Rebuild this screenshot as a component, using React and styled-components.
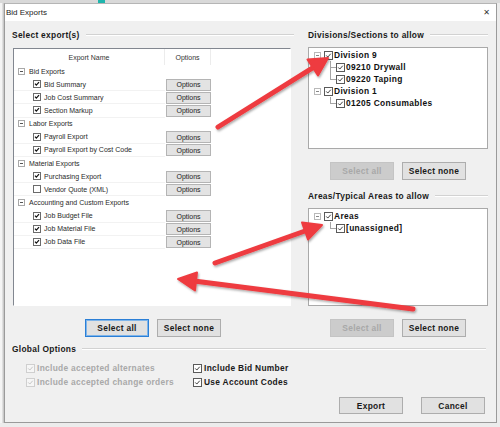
import React from 'react';
import styled, { createGlobalStyle, css } from 'styled-components';

const GlobalStyle = createGlobalStyle`
  html, body {
    margin: 0;
    padding: 0;
    background: #ececec;
    width: 500px;
    height: 427px;
    overflow: hidden;
  }
  * { box-sizing: border-box; }
`;

const boldText = css`
  font-weight: bold;
  font-size: 8.4px;
  letter-spacing: 0.3px;
`;

const exportGroups = [
  { name: 'Bid Exports', items: [['Bid Summary', true], ['Job Cost Summary', true], ['Section Markup', true]] },
  { name: 'Labor Exports', items: [['Payroll Export', true], ['Payroll Export by Cost Code', true]] },
  { name: 'Material Exports', items: [['Purchasing Export', true], ['Vendor Quote (XML)', false]] },
  {
    name: 'Accounting and Custom Exports',
    items: [['Job Budget File', true], ['Job Material File', true], ['Job Data File', true]],
  },
];

const divisions = [
  { name: 'Division 9', children: ['09210 Drywall', '09220 Taping'] },
  { name: 'Division 1', children: ['01205 Consumables'] },
];

const areas = [{ name: 'Areas', children: ['[unassigned]'] }];

const Check = ({ kind = 'classic', checked = true }) => {
  if (kind === 'classic') {
    return (
      <ClassicBox>
        {checked && (
          <svg width="8" height="8" viewBox="0 0 8 8">
            <path d="M1.3 3.6 L3.1 5.6 L6.7 1.6" fill="none" stroke="#111" strokeWidth="1.6" />
          </svg>
        )}
      </ClassicBox>
    );
  }
  return (
    <FlatBox $kind={kind}>
      {checked && (
        <svg width="9" height="9" viewBox="0 0 9 9">
          <path
            d="M1.6 4.4 L3.6 6.5 L7.4 2.2"
            fill="none"
            stroke={kind === 'disabled' ? '#c2c2c2' : '#333'}
            strokeWidth="1.2"
          />
        </svg>
      )}
    </FlatBox>
  );
};

const TreeList = ({ nodes }) => (
  <TreeBox>
    {nodes.map((node) => (
      <div key={node.name}>
        <TreeRow>
          <Expander>
            <svg width="7" height="7" viewBox="0 0 7 7">
              <rect x="0.5" y="0.5" width="6" height="6" fill="#fff" stroke="#b9b9b9" />
              <path d="M2 3.5 H5" stroke="#888" />
            </svg>
          </Expander>
          <Check kind="tree" />
          <TreeLabel>{node.name}</TreeLabel>
        </TreeRow>
        <TreeChildren>
          {node.children.map((child, i) => (
            <TreeRow key={child}>
              <Elbow $last={i === node.children.length - 1} />
              <Check kind="tree" />
              <TreeLabel>{child}</TreeLabel>
            </TreeRow>
          ))}
        </TreeChildren>
      </div>
    ))}
  </TreeBox>
);

const Arrows = () => (
  <ArrowLayer width="500" height="427" viewBox="0 0 500 427">
    <defs>
      <filter id="sh" x="-20%" y="-20%" width="140%" height="140%">
        <feDropShadow dx="1" dy="1.5" stdDeviation="1.2" floodColor="#000" floodOpacity="0.35" />
      </filter>
    </defs>
    <g filter="url(#sh)" fill="#ee3b3f" stroke="#ee3b3f" strokeLinecap="round" strokeLinejoin="round">
      <line x1="218" y1="127" x2="313" y2="67.6" strokeWidth="5" />
      <polygon points="328,58 318,75.5 307.5,59.5" strokeWidth="2" />
      <line x1="215" y1="263" x2="305" y2="231" strokeWidth="5" />
      <polygon points="322,225 308,239.5 302,222.5" strokeWidth="2" />
      <line x1="413" y1="309" x2="196" y2="281.3" strokeWidth="5" />
      <polygon points="178,279 197,272.5 195,290.5" strokeWidth="2" />
    </g>
  </ArrowLayer>
);

const App = () => {
  return (
    <>
      <GlobalStyle />
      <Screen>
        <TopStrip>
          <TealMark />
        </TopStrip>
        <Desk>
          <BackWindow />
          <Dialog>
            <TitleBar>
              <TitleText>Bid Exports</TitleText>
              <CloseGlyph>✕</CloseGlyph>
            </TitleBar>
            <Body>
              <Columns>
                <Column>
                  <GroupHeader>
                    <GroupLabel>Select export(s)</GroupLabel>
                    <Rule />
                  </GroupHeader>
                  <ListBox>
                    <HeaderRow>
                      <NameHead>Export Name</NameHead>
                      <OptHead>Options</OptHead>
                    </HeaderRow>
                    {exportGroups.map((group) => (
                      <React.Fragment key={group.name}>
                        <ListRow>
                          <NameCell $group>
                            <GroupToggle>
                              <svg width="7" height="7" viewBox="0 0 7 7">
                                <rect x="0.5" y="0.5" width="6" height="6" fill="#fff" stroke="#a8a8a8" />
                                <path d="M2 3.5 H5" stroke="#555" />
                              </svg>
                            </GroupToggle>
                            {group.name}
                          </NameCell>
                        </ListRow>
                        {group.items.map(([label, on]) => (
                          <ListRow key={label}>
                            <NameCell>
                              <Check kind="classic" checked={on} />
                              {label}
                            </NameCell>
                            <OptCell>
                              <OptionsButton>Options</OptionsButton>
                            </OptCell>
                          </ListRow>
                        ))}
                      </React.Fragment>
                    ))}
                  </ListBox>
                  <ButtonRow>
                    <Button $focused>Select all</Button>
                    <Button>Select none</Button>
                  </ButtonRow>
                </Column>

                <Column>
                  <GroupHeader>
                    <GroupLabel>Divisions/Sections to allow</GroupLabel>
                    <Rule />
                  </GroupHeader>
                  <TreeFrame $height={102}>
                    <TreeList nodes={divisions} />
                  </TreeFrame>
                  <ButtonRow>
                    <Button disabled>Select all</Button>
                    <Button>Select none</Button>
                  </ButtonRow>
                  <GroupHeader $top={9}>
                    <GroupLabel>Areas/Typical Areas to allow</GroupLabel>
                    <Rule />
                  </GroupHeader>
                  <TreeFrame $height={98}>
                    <TreeList nodes={areas} />
                  </TreeFrame>
                  <ButtonRow>
                    <Button disabled>Select all</Button>
                    <Button>Select none</Button>
                  </ButtonRow>
                </Column>
              </Columns>

              <GroupHeader $top={5}>
                <GroupLabel>Global Options</GroupLabel>
                <Rule />
              </GroupHeader>
              <OptionsGrid>
                <OptionLine $disabled>
                  <Check kind="disabled" />
                  Include accepted alternates
                </OptionLine>
                <OptionLine>
                  <Check kind="flat" />
                  Include Bid Number
                </OptionLine>
                <OptionLine $disabled>
                  <Check kind="disabled" />
                  Include accepted change orders
                </OptionLine>
                <OptionLine>
                  <Check kind="flat" />
                  Use Account Codes
                </OptionLine>
              </OptionsGrid>

              <Footer>
                <Button>Export</Button>
                <Button>Cancel</Button>
              </Footer>
            </Body>
          </Dialog>
        </Desk>
        <Arrows />
      </Screen>
    </>
  );
};

const Screen = styled.div`
  position: relative;
  width: 500px;
  height: 427px;
  font-family: 'Liberation Sans', Arial, sans-serif;
  color: #1a1a1a;
`;

const TopStrip = styled.div`
  height: 3px;
  background: #d9d9d9;
  display: flex;
`;

const TealMark = styled.div`
  margin-left: 98px;
  width: 7px;
  background: #1fb5ad;
`;

const Desk = styled.div`
  display: flex;
  height: 420px;
`;

const BackWindow = styled.div`
  width: 4px;
  background: linear-gradient(90deg, #f4f4f4 0, #f4f4f4 2px, #c9c9c9 3px);
`;

const Dialog = styled.div`
  width: 493px;
  display: flex;
  flex-direction: column;
  background: #f0f0f0;
  border: 1px solid #9a9a9a;
  border-top-color: #b5b5b5;
`;

const TitleBar = styled.div`
  height: 17px;
  background: #fff;
  display: flex;
  align-items: center;
  justify-content: space-between;
  padding: 0 6px 0 1px;
`;

const TitleText = styled.span`
  font-size: 8px;
  color: #222;
`;

const CloseGlyph = styled.span`
  font-size: 8px;
  color: #333;
  font-family: 'DejaVu Sans', sans-serif;
`;

const Body = styled.div`
  flex: 1;
  padding: 7px 10px 0 7px;
  display: flex;
  flex-direction: column;
`;

const Columns = styled.div`
  display: grid;
  grid-template-columns: 282px 180px;
  column-gap: 14px;
`;

const Column = styled.div`
  display: flex;
  flex-direction: column;
`;

const GroupHeader = styled.div`
  display: flex;
  align-items: center;
  height: 14px;
  margin-top: ${(p) => p.$top || 0}px;
  gap: 6px;
  margin-bottom: 5px;
`;

const GroupLabel = styled.span`
  ${boldText}
  color: #1a1a1a;
  white-space: nowrap;
`;

const Rule = styled.div`
  flex: 1;
  height: 2px;
  border-top: 1px solid #d2d2d2;
  border-bottom: 1px solid #fff;
`;

const ListBox = styled.div`
  margin-left: 1px;
  margin-top: 1px;
  width: 278px;
  height: 258px;
  background: #fff;
  border: 1px solid #828790;
  border-right-color: #fff;
  border-bottom-color: #fff;
  overflow: hidden;
`;

const HeaderRow = styled.div`
  display: flex;
  height: 16px;
  font-size: 7px;
  color: #333;
`;

const NameHead = styled.div`
  width: 151px;
  display: flex;
  align-items: center;
  justify-content: center;
  border-right: 1px solid #ececec;
`;

const OptHead = styled.div`
  width: 46px;
  display: flex;
  align-items: center;
  justify-content: center;
  border-right: 1px solid #ececec;
`;

const ListRow = styled.div`
  display: flex;
  height: 13.15px;
  font-size: 7px;
  color: #2a2a2a;
`;

const NameCell = styled.div`
  width: 151px;
  display: flex;
  align-items: center;
  gap: 3px;
  padding-left: ${(p) => (p.$group ? 4 : 19)}px;
  border-bottom: 1px solid ${(p) => (p.$group ? '#fff' : '#f2f2f2')};
  white-space: nowrap;
`;

const GroupToggle = styled.span`
  display: flex;
  width: 7px;
  height: 7px;
  margin-right: 1px;
`;

const ClassicBox = styled.span`
  display: inline-flex;
  width: 8px;
  height: 8px;
  border: 1px solid #6b6b6b;
  background: #fff;
  align-items: center;
  justify-content: center;
  svg {
    width: 6px;
    height: 6px;
  }
`;

const FlatBox = styled.span`
  display: inline-flex;
  flex-shrink: 0;
  width: 9px;
  height: 9px;
  border: 1px solid ${(p) => (p.$kind === 'disabled' ? '#cfcfcf' : '#5a5a5a')};
  background: ${(p) => (p.$kind === 'disabled' ? '#f6f6f6' : '#fff')};
  align-items: center;
  justify-content: center;
  svg {
    width: 7px;
    height: 7px;
  }
`;

const OptCell = styled.div`
  width: 46px;
  display: flex;
  align-items: center;
  padding: 0 0 0 1px;
`;

const OptionsButton = styled.button`
  width: 45px;
  height: 12px;
  padding: 0;
  font-family: inherit;
  font-size: 7px;
  color: #222;
  background: #e3e3e3;
  border: 1px solid #b4b4b4;
  border-radius: 0;
`;

const ButtonRow = styled.div`
  display: flex;
  justify-content: center;
  gap: 8px;
  margin-top: 13px;
`;

const Button = styled.button`
  width: 64px;
  height: 18px;
  padding: 0;
  font-family: inherit;
  ${boldText}
  color: ${(p) => (p.disabled ? '#a8a8a8' : '#1a1a1a')};
  background: ${(p) => (p.disabled ? '#cccccc' : '#e1e1e1')};
  border: 1px solid ${(p) => (p.$focused ? '#2b7fd6' : p.disabled ? '#c4c4c4' : '#adadad')};
  box-shadow: ${(p) => (p.$focused ? 'inset 0 0 0 1px #7fb5ea' : 'none')};
  border-radius: 0;
`;

const TreeFrame = styled.div`
  height: ${(p) => p.$height}px;
  background: #fff;
  border: 1px solid #a9a9a9;
`;

const TreeBox = styled.div`
  padding: 1px 0 0 5px;
`;

const TreeRow = styled.div`
  display: flex;
  align-items: center;
  height: 12px;
`;

const Expander = styled.span`
  display: flex;
  width: 7px;
  height: 7px;
  margin-right: 3px;
`;

const TreeChildren = styled.div`
  padding-left: 16px;
`;

const Elbow = styled.span`
  align-self: stretch;
  width: 6px;
  background:
    linear-gradient(#a5a5a5, #a5a5a5) left top / 1px ${(p) => (p.$last ? '50%' : '100%')} no-repeat,
    linear-gradient(#a5a5a5, #a5a5a5) left center / 100% 1px no-repeat;
`;

const TreeLabel = styled.span`
  font-weight: bold;
  font-size: 8.4px;
  letter-spacing: 0.35px;
  margin-left: 1px;
  color: #111;
  white-space: nowrap;
`;

const OptionsGrid = styled.div`
  display: grid;
  grid-template-columns: 167px 1fr;
  grid-auto-rows: 14px;
  padding-left: 14px;
`;

const OptionLine = styled.div`
  display: flex;
  align-items: center;
  gap: 2px;
  ${boldText}
  color: ${(p) => (p.$disabled ? '#a9a9a9' : '#1a1a1a')};
  white-space: nowrap;
`;

const Footer = styled.div`
  display: flex;
  justify-content: flex-end;
  gap: 18px;
  margin-top: 8px;
  padding-right: 1px;
  button {
    height: 17px;
  }
`;

const ArrowLayer = styled.svg`
  position: absolute;
  left: 0;
  top: 0;
  pointer-events: none;
`;

export default App;
